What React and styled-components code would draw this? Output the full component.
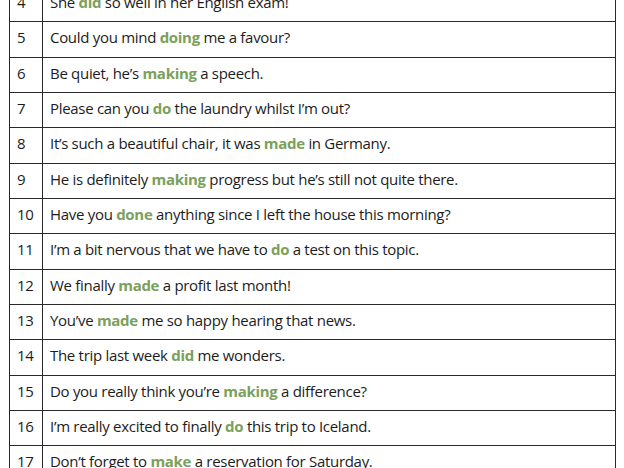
import styled, { createGlobalStyle } from 'styled-components'

const GlobalStyle = createGlobalStyle`
  html, body {
    margin: 0;
    padding: 0;
    background: #fff;
    overflow: hidden;
  }
  body {
    font-family: "Open Sans", "Noto Sans", sans-serif;
    color: #1c1c1c;
  }
`

const Page = styled.div`
  padding: 0 9px;
  margin-top: -14px;
`

const Table = styled.table`
  width: 607px;
  border-collapse: collapse;
  font-size: 15px;
  line-height: 20px;
  letter-spacing: -0.3px;
`

const Row = styled.tr`
  height: 35.33px;
`

const NumCell = styled.td`
  width: 33px;
  box-sizing: border-box;
  padding: 0 0 4px 7px;
  border: 1px solid #2a2a2a;
  vertical-align: middle;
`

const TextCell = styled.td`
  padding: 0 7px 4px;
  border: 1px solid #2a2a2a;
  vertical-align: middle;
`

const Verb = styled.b`
  color: #7ba05b;
  font-weight: 700;
`

const rows = [
  [4, 'She ', 'did', ' so well in her English exam!'],
  [5, 'Could you mind ', 'doing', ' me a favour?'],
  [6, 'Be quiet, he’s ', 'making', ' a speech.'],
  [7, 'Please can you ', 'do', ' the laundry whilst I’m out?'],
  [8, 'It’s such a beautiful chair, it was ', 'made', ' in Germany.'],
  [9, 'He is definitely ', 'making', ' progress but he’s still not quite there.'],
  [10, 'Have you ', 'done', ' anything since I left the house this morning?'],
  [11, 'I’m a bit nervous that we have to ', 'do', ' a test on this topic.'],
  [12, 'We finally ', 'made', ' a profit last month!'],
  [13, 'You’ve ', 'made', ' me so happy hearing that news.'],
  [14, 'The trip last week ', 'did', ' me wonders.'],
  [15, 'Do you really think you’re ', 'making', ' a difference?'],
  [16, 'I’m really excited to finally ', 'do', ' this trip to Iceland.'],
  [17, 'Don’t forget to ', 'make', ' a reservation for Saturday.'],
]

export default function App() {
  return (
    <>
      <GlobalStyle />
      <Page>
        <Table>
          <tbody>
            {rows.map(([n, before, verb, after]) => (
              <Row key={n}>
                <NumCell>{n}</NumCell>
                <TextCell>
                  {before}
                  <Verb>{verb}</Verb>
                  {after}
                </TextCell>
              </Row>
            ))}
          </tbody>
        </Table>
      </Page>
    </>
  )
}
